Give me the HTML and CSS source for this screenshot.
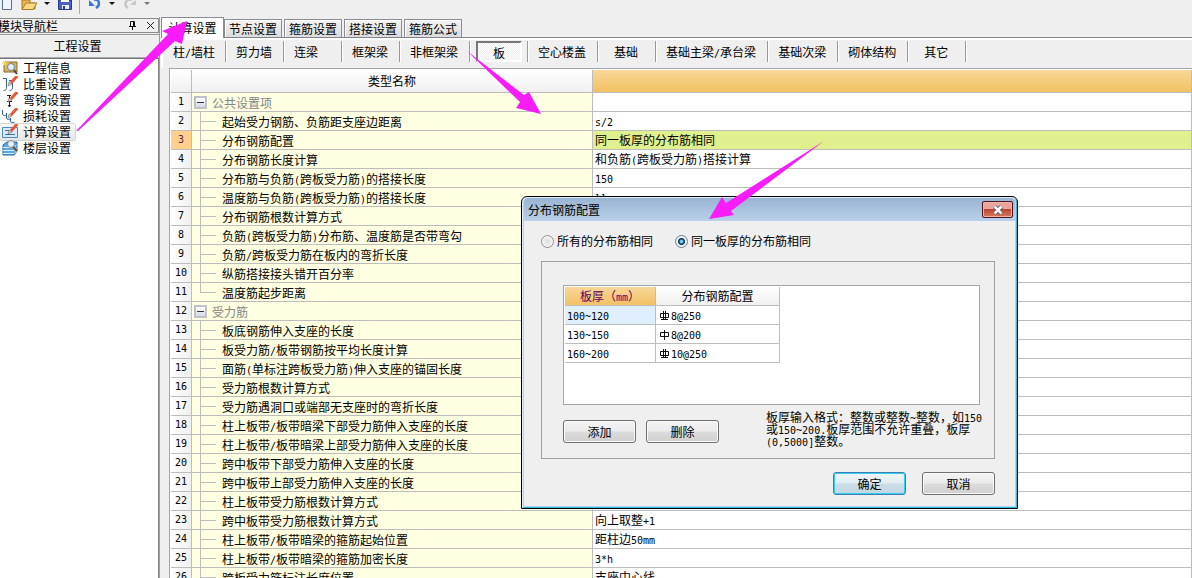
FILE: index.html
```html
<!DOCTYPE html>
<html lang="zh-CN">
<head>
<meta charset="utf-8">
<title>工程设置</title>
<link rel="stylesheet" href="styles.css">
</head>
<body>
<div class="toolbar">
  <button class="tool" aria-label="新建"><svg width="16" height="10" viewBox="0 0 16 10"><path d="M2.500 0V9.500H11.500V0" fill="#eef5fc" stroke="#5c6f8c"/></svg></button>
  <button class="tool wide" aria-label="打开"><svg width="26" height="10" viewBox="0 0 26 10"><path d="M1 0h8v3h5v6H1z" fill="#f0b64a" stroke="#a87a26"/><path d="M1 9.500L5 3h11l-4 6.500z" fill="#fbd983" stroke="#a87a26"/><path d="M23 2h6l-3 3z" fill="#111"/></svg></button>
  <button class="tool" aria-label="保存"><svg width="16" height="10" viewBox="0 0 16 10"><path d="M1.500 0V9.500H14.500V0z" fill="#4a62c8" stroke="#283a90"/><path d="M4 0h8v2H4z" fill="#fff"/><path d="M5 5h7v4H5z" fill="#e9edf8"/><path d="M6 6h2v3H6z" fill="#283a90"/></svg></button>
  <span class="tool-sep"></span>
  <button class="tool wide" aria-label="撤销"><svg width="30" height="10" viewBox="0 0 30 10"><path d="M1 0v6h6L4 3z" fill="#3978d6"/><path d="M6 0C11-2 13 5 8 8" fill="none" stroke="#3978d6" stroke-width="2.500"/><path d="M21 2h6l-3 3z" fill="#111"/></svg></button>
  <button class="tool wide" aria-label="重做"><svg width="30" height="10" viewBox="0 0 30 10"><path d="M12 0v5H6l3-3z" fill="#ccc"/><path d="M8 0C2-2-1 5 4 8" fill="none" stroke="#c6c6c6" stroke-width="2.500"/><path d="M20 2h6l-3 3z" fill="#777"/></svg></button>
</div>

<div class="workspace">
  <aside class="nav">
    <div class="nav-head">
      <span class="nav-title">模块导航栏</span>
      <button class="nav-btn" aria-label="固定"><svg width="9" height="9" viewBox="0 0 9 9"><path d="M2.500 5V.5h4V5M5.500 0v5M1 5.500h7M4.500 6v3" fill="none" stroke="#111"/></svg></button>
      <button class="nav-btn" aria-label="关闭"><svg width="9" height="9" viewBox="0 0 9 9"><path d="M1 1l7 7M8 1L1 8" stroke="#222"/></svg></button>
    </div>
    <h1 class="nav-section">工程设置</h1>
    <ul class="nav-list">
      <li><a class="nav-item" href="#"><svg width="16" height="16" viewBox="0 0 16 16"><path d="M4 2h11v10H2V6z" fill="#d8b25c" stroke="#8d6a25"/><path d="M0 3h7M3.500 0v7M1 1l5 5M6 1L1 6" stroke="#f1cf3a"/><circle cx="9" cy="7" r="3.500" fill="#dff0fc" stroke="#6684a8"/><path d="M12 10l3 4" stroke="#5a4530" stroke-width="2"/></svg>工程信息</a></li>
      <li><a class="nav-item" href="#"><svg width="16" height="16" viewBox="0 0 16 16"><path d="M1 2.500h3.500v9c0 2-1 3-3 3M7 4.500h3.500v7c0 2-1 3-3 3" fill="none" stroke="#2d5fa5"/><path d="M9 7l6-7" stroke="#e85a35" stroke-width="3"/><path d="M6 10l1-4 3 2z" fill="#f3c9a5" stroke="#555" stroke-width=".5"/></svg>比重设置</a></li>
      <li><a class="nav-item" href="#"><svg width="16" height="16" viewBox="0 0 16 16"><path d="M5 3.500h4M7.500 4v11M5 9.500h5M6 13l1.500 2L9 13" fill="none" stroke="#222"/><path d="M9 7l6-7" stroke="#e85a35" stroke-width="3"/><path d="M6 10l1-4 3 2z" fill="#f3c9a5" stroke="#555" stroke-width=".5"/></svg>弯钩设置</a></li>
      <li><a class="nav-item" href="#"><svg width="16" height="16" viewBox="0 0 16 16"><path d="M.5 2v4c0 2 4 2 4 0V5v5c0 2 4 2 4 0v3c0 2 2 2 4 1" fill="none" stroke="#2d5fa5"/><path d="M9 7l6-7" stroke="#e85a35" stroke-width="3"/><path d="M6 10l1-4 3 2z" fill="#f3c9a5" stroke="#555" stroke-width=".5"/></svg>损耗设置</a></li>
      <li><a class="nav-item active" href="#"><svg width="16" height="16" viewBox="0 0 16 16"><path d="M.5 3.500h15v10H.5z" fill="#d5eafd" stroke="#5287c2"/><path d="M3 6.500h4M3 10.500h10" stroke="#3a6eb0"/><path d="M9 7l6-7" stroke="#e85a35" stroke-width="3"/><path d="M6 10l1-4 3 2z" fill="#f3c9a5" stroke="#555" stroke-width=".5"/></svg>计算设置</a></li>
      <li><a class="nav-item" href="#"><svg width="16" height="16" viewBox="0 0 16 16"><path d="M1 5l4-3h10v9l-3 4H1z" fill="#61a7df" stroke="#1d68ab"/><path d="M1 7.500h11l3-3M1 10.500h11l3-3M1 13.500h11l3-3" fill="none" stroke="#d9edfb"/><circle cx="9" cy="4" r="3.500" fill="#e3f2fc" stroke="#7a8998"/><path d="M11 7l4 4" stroke="#6b513b" stroke-width="2"/></svg>楼层设置</a></li>
    </ul>
  </aside>

  <main class="panel">
    <div class="tabs">
      <button class="tab active">计算设置</button>
      <button class="tab">节点设置</button>
      <button class="tab">箍筋设置</button>
      <button class="tab">搭接设置</button>
      <button class="tab">箍筋公式</button>
    </div>
    <div class="parts">
      <button class="part first">柱<span class="n">/</span>墙柱</button>
      <button class="part">剪力墙</button>
      <button class="part lead">连梁</button>
      <button class="part">框架梁</button>
      <button class="part">非框架梁</button>
      <button class="part pressed"><span class="well">板</span></button>
      <button class="part">空心楼盖</button>
      <button class="part">基础</button>
      <button class="part">基础主梁<span class="n">/</span>承台梁</button>
      <button class="part">基础次梁</button>
      <button class="part">砌体结构</button>
      <button class="part">其它</button>
    </div>
    <div class="sheet">
      <table class="grid">
        <colgroup><col class="c-num"><col class="c-name"><col></colgroup>
        <thead><tr><th></th><th>类型名称</th><th class="hot"></th></tr></thead>
        <tbody>
          <tr><th>1</th><td class="group"><button class="fold" aria-label="折叠"></button>公共设置项</td><td></td></tr>
          <tr><th>2</th><td class="leaf">起始受力钢筋、负筋距支座边距离</td><td><span class="n">s/2</span></td></tr>
          <tr class="current"><th>3</th><td class="leaf">分布钢筋配置</td><td>同一板厚的分布筋相同</td></tr>
          <tr><th>4</th><td class="leaf">分布钢筋长度计算</td><td>和负筋<span class="n">(</span>跨板受力筋<span class="n">)</span>搭接计算</td></tr>
          <tr><th>5</th><td class="leaf">分布筋与负筋<span class="n">(</span>跨板受力筋<span class="n">)</span>的搭接长度</td><td><span class="n">150</span></td></tr>
          <tr><th>6</th><td class="leaf">温度筋与负筋<span class="n">(</span>跨板受力筋<span class="n">)</span>的搭接长度</td><td><span class="n">ll</span></td></tr>
          <tr><th>7</th><td class="leaf">分布钢筋根数计算方式</td><td></td></tr>
          <tr><th>8</th><td class="leaf">负筋<span class="n">(</span>跨板受力筋<span class="n">)</span>分布筋、温度筋是否带弯勾</td><td></td></tr>
          <tr><th>9</th><td class="leaf">负筋<span class="n">/</span>跨板受力筋在板内的弯折长度</td><td></td></tr>
          <tr><th>10</th><td class="leaf">纵筋搭接接头错开百分率</td><td></td></tr>
          <tr><th>11</th><td class="leaf last">温度筋起步距离</td><td></td></tr>
          <tr><th>12</th><td class="group"><button class="fold" aria-label="折叠"></button>受力筋</td><td></td></tr>
          <tr><th>13</th><td class="leaf">板底钢筋伸入支座的长度</td><td></td></tr>
          <tr><th>14</th><td class="leaf">板受力筋<span class="n">/</span>板带钢筋按平均长度计算</td><td></td></tr>
          <tr><th>15</th><td class="leaf">面筋<span class="n">(</span>单标注跨板受力筋<span class="n">)</span>伸入支座的锚固长度</td><td></td></tr>
          <tr><th>16</th><td class="leaf">受力筋根数计算方式</td><td></td></tr>
          <tr><th>17</th><td class="leaf">受力筋遇洞口或端部无支座时的弯折长度</td><td></td></tr>
          <tr><th>18</th><td class="leaf">柱上板带<span class="n">/</span>板带暗梁下部受力筋伸入支座的长度</td><td></td></tr>
          <tr><th>19</th><td class="leaf">柱上板带<span class="n">/</span>板带暗梁上部受力筋伸入支座的长度</td><td></td></tr>
          <tr><th>20</th><td class="leaf">跨中板带下部受力筋伸入支座的长度</td><td></td></tr>
          <tr><th>21</th><td class="leaf">跨中板带上部受力筋伸入支座的长度</td><td></td></tr>
          <tr><th>22</th><td class="leaf">柱上板带受力筋根数计算方式</td><td></td></tr>
          <tr><th>23</th><td class="leaf">跨中板带受力筋根数计算方式</td><td>向上取整<span class="n">+1</span></td></tr>
          <tr><th>24</th><td class="leaf">柱上板带<span class="n">/</span>板带暗梁的箍筋起始位置</td><td>距柱边<span class="n">50mm</span></td></tr>
          <tr><th>25</th><td class="leaf">柱上板带<span class="n">/</span>板带暗梁的箍筋加密长度</td><td><span class="n">3*h</span></td></tr>
          <tr><th>26</th><td class="leaf">跨板受力筋标注长度位置</td><td>支座中心线</td></tr>
        </tbody>
      </table>
    </div>
  </main>
</div>

<section class="dialog" role="dialog" aria-labelledby="dlg-title">
  <header class="dlg-head">
    <h2 id="dlg-title">分布钢筋配置</h2>
    <button class="dlg-close" aria-label="关闭"><svg width="12" height="10" viewBox="0 0 12 10"><path d="M2.500 1.500l7 7M9.500 1.500l-7 7" stroke="#4a5068" stroke-width="4"/><path d="M2.500 1.500l7 7M9.500 1.500l-7 7" stroke="#fff" stroke-width="2.500"/></svg></button>
  </header>
  <div class="dlg-body">
    <div class="radios">
      <label><input type="radio" name="mode">所有的分布筋相同</label>
      <label><input type="radio" name="mode" checked>同一板厚的分布筋相同</label>
    </div>
    <div class="box">
      <div class="well-table">
        <table class="grid mini">
          <colgroup><col class="c-thick"><col class="c-conf"></colgroup>
          <thead><tr><th class="hot">板厚（<span class="n">mm</span>）</th><th>分布钢筋配置</th></tr></thead>
          <tbody>
            <tr><td class="picked"><span class="n">100~120</span></td><td><svg class="bar" width="9" height="10" viewBox="0 0 9 10"><path d="M.5 2.500h8v4h-8zM3.500 0v9M5.500 0v9M1 8.500h7" fill="none" stroke="#111"/></svg><span class="n">8@250</span></td></tr>
            <tr><td><span class="n">130~150</span></td><td><svg class="bar" width="9" height="10" viewBox="0 0 9 10"><path d="M.5 2.500h8v4h-8zM4.500 0v10" fill="none" stroke="#111"/></svg><span class="n">8@200</span></td></tr>
            <tr><td><span class="n">160~200</span></td><td><svg class="bar" width="9" height="10" viewBox="0 0 9 10"><path d="M.5 2.500h8v4h-8zM3.500 0v9M5.500 0v9M1 8.500h7" fill="none" stroke="#111"/></svg><span class="n">10@250</span></td></tr>
          </tbody>
        </table>
      </div>
      <div class="box-foot">
        <button class="btn">添加</button>
        <button class="btn">删除</button>
        <p class="hint">板厚输入格式：整数或整数<span class="n">~</span>整数，如<span class="n">150</span><br>或<span class="n">150~200.</span>板厚范围不允许重叠，板厚<br><span class="n">(0,5000]</span>整数。</p>
      </div>
    </div>
    <div class="actions">
      <button class="btn primary">确定</button>
      <button class="btn">取消</button>
    </div>
  </div>
</section>

<svg class="marks" width="1192" height="578" viewBox="0 0 1192 578" aria-hidden="true">
  <path d="M76 131L168 34 162 31 187 21 182 44 175 41 78 131z"/>
  <path d="M467 51L524 95 529 92 541 114 516 108 520 102z"/>
  <path d="M824 141L731 211 734 215 709 219 722 197 726 203z"/>
</svg>
</body>
</html>
```
FILE: styles.css
```css
* { box-sizing: border-box; }
body {
  margin: 0;
  height: 100vh;
  overflow: hidden;
  display: flex;
  flex-direction: column;
  position: relative;
  background: #efefef;
  color: #000;
  font: 12px/16px "Noto Sans CJK SC", sans-serif;
}
button {
  font: inherit;
  color: inherit;
  padding: 0;
  border: 0;
  background: none;
  white-space: nowrap;
}
h1, h2, p, ul { margin: 0; padding: 0; font: inherit; }
svg { display: block; flex: none; }
.n { font-family: "DejaVu Sans Mono", monospace; font-size: 10px; line-height: 0; }

/* toolbar */
.toolbar { display: flex; align-items: flex-start; height: 17px; flex: none; }
.tool { width: 16px; margin-right: 5px; }
.tool.wide { width: 30px; margin-right: 6px; }
.tool svg { overflow: visible; }
.tool-sep { width: 1px; height: 14px; margin: 0 8px 0 1px; background: #aaa; }

.workspace { display: flex; flex: 1; min-height: 0; }

/* module navigation */
.nav { width: 160px; flex: none; display: flex; flex-direction: column; padding-top: 1px; border-right: 1px solid #9c9ca4; }
.nav-head { display: flex; align-items: center; height: 15px; gap: 9px; padding-right: 3px; border: 1px solid #8c8c8c; border-left: 0; }
.nav-title { flex: 1; margin-left: -2px; }
.nav-section { height: 24px; margin-top: 1px; padding: 3px 4px 0 0; text-align: center; border-top: 1px solid #999; border-bottom: 1px solid #aaa; }
.nav-list { flex: 1; list-style: none; background: #fff; border-top: 1px solid #777; border-right: 1px solid #888; padding-top: 1px; }
.nav-list li { height: 16px; }
.nav-item { display: inline-flex; align-items: center; gap: 5px; height: 16px; padding: 0 4px 0 2px; color: #000; text-decoration: none; vertical-align: top; border-radius: 2px; }
.nav-item.active { background: linear-gradient(#fafafa, #e6e6e6); box-shadow: 0 0 0 1px #d4d4d4; }

/* tabs */
.panel { flex: 1; min-width: 0; display: flex; flex-direction: column; padding-left: 1px; }
.tabs { display: flex; align-items: flex-end; gap: 2px; height: 21px; border-bottom: 1px solid #83848c; }
.tab { width: 58px; height: 18px; border: 1px solid #898b95; border-bottom: 0; background: linear-gradient(#f3f3f3, #dcdcdc); box-shadow: inset 1px 1px #fff; }
.tab.active { width: 63px; height: 21px; margin: 0 -2px -1px 0; background: #fff; }

/* component strip */
.parts { display: flex; height: 30px; padding-top: 1px; border-left: 2px solid #fff; border-top: 2px solid #fff; }
.part { min-width: 58px; height: 21px; padding: 0 11px 0 10px; border-right: 1px solid #999; box-shadow: 1px 0 #fff; flex: none; }
.part.first { width: 63px; }
.part.lead { text-align: left; }
.part.pressed { padding: 0 5px 0 6px; }
.well { display: block; height: 21px; line-height: 19px; border: 2px solid; border-color: #777 #fff #fff #777; background: repeating-conic-gradient(#fff 0 25%, #eee 0 50%) 0 0 / 2px 2px; }

/* data grid */
.sheet { flex: 1; min-height: 0; overflow: hidden; margin-left: 8px; border-top: 1px solid #a5a5ab; border-left: 1px solid #a5a5ab; padding: 1px 0 0 1px; background: #fff; }
.grid { width: 100%; table-layout: fixed; border-collapse: separate; border-spacing: 0; }
.c-num { width: 21px; }
.c-name { width: 401px; }
.grid th, .grid td { height: 19px; padding: 0; border: 0 solid #bdbdbd; border-width: 0 1px 1px 0; line-height: 16px; font-weight: 400; text-align: left; white-space: nowrap; overflow: hidden; }
.grid th { text-align: center; background: linear-gradient(#fff, #f0f0f0); }
.sheet thead th { height: 23px; }
.grid tbody th { font: 10px/16px "DejaVu Sans Mono", monospace; background: linear-gradient(90deg, #fff, #f0f0f0); }
.grid th.hot { background: linear-gradient(#f9d799, #f1c163); }
.grid td { padding-left: 2px; background: #fff; }
.grid .leaf, .grid .group { padding-top: 2px; background-color: #ffffe1; }
.grid .leaf {
  padding-left: 30px;
  background-image: linear-gradient(#bdbdbd, #bdbdbd), linear-gradient(#bdbdbd, #bdbdbd);
  background-size: 1px 100%, 16px 1px;
  background-position: 8px 0, 8px 9px;
  background-repeat: no-repeat;
}
.grid .leaf.last { background-size: 1px 9px, 16px 1px; }
.grid .group { color: #858585; }
.fold { float: left; width: 13px; height: 13px; margin: 1px 5px 0 0; border: 2px solid #bfc1ca; background: linear-gradient(#333, #333) center / 7px 1px no-repeat, linear-gradient(#fff, #d5d8e2); }
.grid .current th { background: #fed08a; color: #602060; }
.grid .current td:last-child { background: #e1f08f; }

/* dialog */
.dialog { position: absolute; left: 521px; top: 196px; width: 497px; border: 1px solid #000; border-radius: 6px 6px 0 0; background: #efefef; box-shadow: inset 1px 1px #e2edf9, inset -1px -1px #35b9df, inset 2px 0 #b9d1ea, inset -2px -2px #b4d3ea; }
.dlg-head { display: flex; align-items: center; justify-content: space-between; height: 23px; margin: 1px 2px 0; padding: 0 2px 0 4px; border-radius: 4px 4px 0 0; background: linear-gradient(#99b4d1, #b9d1ea); }
.dlg-close { display: grid; place-items: center; width: 31px; height: 17px; border: 1px solid #54121d; border-radius: 2px; background: linear-gradient(#e7a59b 0 45%, #bd4531 50%, #d67a5e); box-shadow: inset 0 0 0 1px #e9b5a9; }
.dlg-body { padding: 12px 22px 13px 19px; }
.radios { display: flex; gap: 22px; height: 16px; }
.radios label { display: flex; align-items: center; gap: 3px; }
.radios input { appearance: none; width: 13px; height: 13px; margin: 0; border: 1px solid #8e8f8f; border-radius: 50%; background: radial-gradient(#ddd, #fff); box-shadow: inset 0 0 0 1px #f4f4f4; }
.radios input:checked { border-color: #6c7f90; background: radial-gradient(circle at 50% 50%, #79dcff 0 1px, #17709f 2px, #10344f 3px, #e8eef2 4px); }
.box { margin-top: 12px; padding: 23px 14px 11px 21px; border: 1px solid #a0a0a0; }
.well-table { height: 120px; padding: 1px; border: 1px solid #a5a5ab; background: #fff; }
.grid.mini { width: 215px; }
.c-thick { width: 91px; }
.c-conf { width: 124px; }
.mini th.hot { color: #600060; }
.grid.mini .picked { background: #e0efff; }
.bar { display: inline-block; vertical-align: -1px; margin: 0 2px 0 2px; }
.box-foot { display: flex; gap: 10px; padding-top: 6px; }
.btn { width: 73px; height: 23px; border: 1px solid #707070; border-radius: 3px; background: linear-gradient(#f3f3f3, #ebebeb 48%, #dcdcdc 52%, #cfcfcf); box-shadow: inset 0 0 0 1px #fafafa; flex: none; }
.box-foot .btn { margin-top: 9px; }
.hint { margin-left: 37px; line-height: 12px; white-space: nowrap; }
.actions { display: flex; justify-content: flex-end; gap: 16px; margin-top: 13px; }
.btn.primary { border-color: #3c7fb1; background: linear-gradient(#eff5f8, #e2edf2 48%, #cbdde5 52%, #c4d8e2); box-shadow: inset 0 0 0 1px #35cdf5; }

/* callout arrows */
.marks { position: absolute; left: 0; top: 0; pointer-events: none; fill: #f81cf8; }
```
